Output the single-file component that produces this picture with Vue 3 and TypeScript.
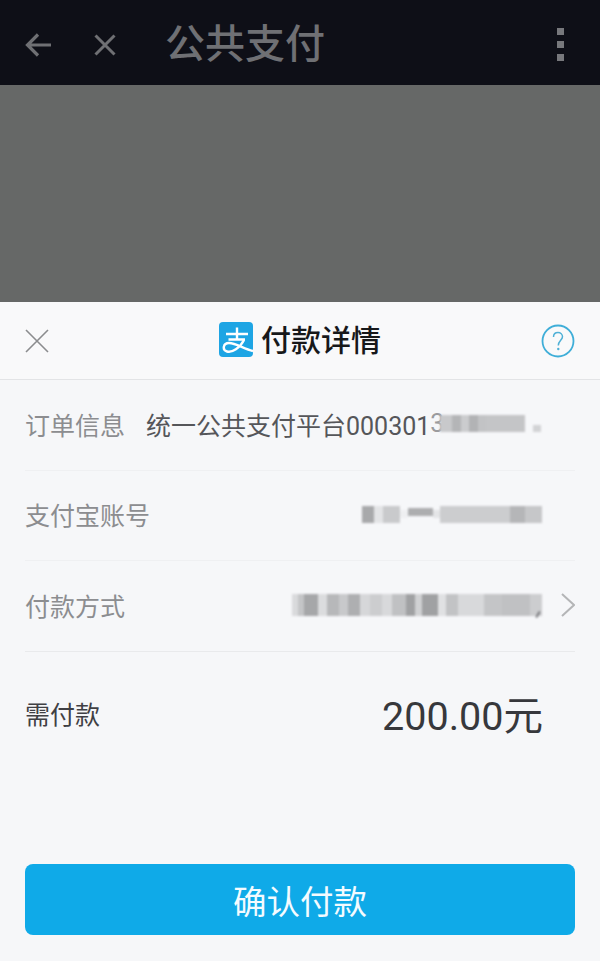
<script setup lang="ts">
interface Cell { w: number; c: string; h?: number; up?: number }
const orderBlur: Cell[] = [
  { w: 12, c: '#c8c9cb' }, { w: 9, c: '#b4b5b7' }, { w: 8, c: '#cbccce' }, { w: 9, c: '#b2b3b5' }, { w: 8, c: '#c2c3c5' }, { w: 39, c: '#c4c5c7' }
]
const accountBlur: Cell[] = [
  { w: 12, c: '#a8a9ab' }, { w: 9, c: '#e3e4e6' }, { w: 17, c: '#c9cacc' }, { w: 8, c: '#eeeff1', h: 8 },
  { w: 25, c: '#adaeb0', h: 8, up: 5 }, { w: 7, c: '#e4e5e7', h: 8 }, { w: 70, c: '#cccdcf' }, { w: 15, c: '#b5b6b8' }, { w: 17, c: '#c6c7c9' }
]
const methodBlur: Cell[] = [
  { w: 6, c: '#d9dadc' }, { w: 6, c: '#c4c5c7' }, { w: 14, c: '#a6a7a9' }, { w: 9, c: '#dbdcde' }, { w: 12, c: '#b7b8ba' }, { w: 9, c: '#c8c9cb' },
  { w: 12, c: '#aeafb1' }, { w: 10, c: '#d6d7d9' }, { w: 12, c: '#cccdcf' }, { w: 10, c: '#d8d9db' }, { w: 14, c: '#c0c1c3' }, { w: 9, c: '#a0a1a3' },
  { w: 7, c: '#d0d1d3' }, { w: 16, c: '#a0a1a3' }, { w: 8, c: '#e0e1e3' }, { w: 12, c: '#c2c3c5' }, { w: 26, c: '#d8d9db' }, { w: 18, c: '#c4c5c7' },
  { w: 28, c: '#c0c1c3' }, { w: 12, c: '#cccdcf' }
]
</script>

<template>
  <div class="page">
    <header class="topbar">
      <svg class="ico" width="30" height="30" viewBox="0 0 30 30" fill="none">
        <path d="M27 15H4M14 4.500L3.500 15 14 25.500" stroke="#6f7074" stroke-width="3.200" />
      </svg>
      <svg class="ico cross" width="24" height="24" viewBox="0 0 24 24" fill="none">
        <path d="M2.500 2.500L21.500 21.500M21.500 2.500L2.500 21.500" stroke="#6f7074" stroke-width="3" />
      </svg>
      <h1 class="title">公共支付</h1>
      <div class="dots"><i></i><i></i><i></i></div>
    </header>

    <div class="dim"></div>

    <section class="sheet">
      <div class="sheet-head">
        <svg width="26" height="26" viewBox="0 0 26 26" fill="none">
          <path d="M2 2L24 24M24 2L2 24" stroke="#8b8c8e" stroke-width="1.600" />
        </svg>
        <div class="head-title">
          <svg class="logo" width="34" height="35" viewBox="0 0 34 35">
            <rect width="34" height="35" rx="4" fill="#1ea5e4" />
            <g fill="none" stroke="#fff" stroke-width="2.400">
              <path d="M7 12H29M18 5.500V17.500M9.500 17.500H26" />
              <path d="M25 18C21 26 13 31 8 29.500C3 28 4 21 10 21C17 21 25 27 34 29" />
            </g>
          </svg>
          <span>付款详情</span>
        </div>
        <svg width="34" height="34" viewBox="0 0 34 34" fill="none">
          <circle cx="17" cy="17" r="15.500" stroke="#3faed8" stroke-width="1.800" />
          <path d="M12.500 13C12.500 10 14.500 8.500 17 8.500C19.500 8.500 21.500 10.300 21.500 12.800C21.500 16 17.300 17 17.300 21.500" stroke="#4fb0d6" stroke-width="1.500" />
          <circle cx="17.300" cy="25" r="1.200" fill="#4fb0d6" />
        </svg>
      </div>

      <div class="rows">
        <div class="row">
          <span class="label">订单信息</span>
          <span class="order">统一公共支付平台000301</span><span class="order-end">3</span>
          <span class="mosaic order-blur">
            <i v-for="(m, i) in orderBlur" :key="i" :style="{ width: m.w + 'px', background: m.c }"></i>
          </span>
          <span class="speck"></span>
        </div>
        <div class="row">
          <span class="label">支付宝账号</span>
          <span class="mosaic account-blur">
            <i
              v-for="(m, i) in accountBlur"
              :key="i"
              :style="{ width: m.w + 'px', background: m.c, height: (m.h || 17) + 'px', marginBottom: (m.up || 0) + 'px' }"
            ></i>
          </span>
        </div>
        <div class="row">
          <span class="label">付款方式</span>
          <span class="mosaic method-blur">
            <i v-for="(m, i) in methodBlur" :key="i" :style="{ width: m.w + 'px', background: m.c }"></i>
          </span>
          <svg class="chev" width="16" height="26" viewBox="0 0 16 26" fill="none">
            <path d="M3 2L15 13L3 24" stroke="#b4b5b7" stroke-width="2" />
          </svg>
        </div>
      </div>

      <div class="amount">
        <span class="amount-label">需付款</span>
        <span class="amount-value">200.00元</span>
      </div>

      <button class="pay" type="button">确认付款</button>
    </section>
  </div>
</template>

<style scoped>
.page {
  width: 600px;
  height: 961px;
  display: flex;
  flex-direction: column;
  overflow: hidden;
  font-family: Roboto, "Noto Sans CJK SC", sans-serif;
}
.topbar {
  height: 85px;
  flex: none;
  box-sizing: border-box;
  background: #0e0f17;
  display: flex;
  align-items: center;
  padding: 4px 36px 0 24px;
}
.ico {
  flex: none;
}
.cross {
  margin-left: 39px;
}
.title {
  margin: 0 0 0 48px;
  font-size: 40px;
  font-weight: 500;
  line-height: 48px;
  color: #6f7074;
}
.dots {
  margin-left: auto;
  display: flex;
  flex-direction: column;
  gap: 6px;
}
.dots i {
  display: block;
  width: 7px;
  height: 7px;
  background: #77787c;
}
.dim {
  height: 217px;
  flex: none;
  background: #666867;
}
.sheet {
  flex: 1;
  background: #f6f7f9;
  display: flex;
  flex-direction: column;
  padding-bottom: 26px;
}
.sheet-head {
  height: 78px;
  flex: none;
  box-sizing: border-box;
  background: #f9f9fa;
  border-bottom: 1px solid #e3e4e6;
  display: flex;
  align-items: center;
  justify-content: space-between;
  padding: 0 25px 0 24px;
}
.head-title {
  display: flex;
  align-items: center;
  gap: 8px;
  font-size: 30px;
  font-weight: 500;
  line-height: 36px;
  color: #17181a;
  margin-left: 9px;
}
.logo {
  margin-top: -2px;
}
.rows {
  margin: 0 25px;
  display: flex;
  flex-direction: column;
}
.row {
  height: 90.500px;
  box-sizing: border-box;
  border-bottom: 1px solid #eff0f2;
  display: flex;
  align-items: center;
  font-size: 25px;
  padding-bottom: 2px;
}
.row:last-child {
  border-bottom-color: #e9eaec;
}
.label {
  color: #8c8d90;
  white-space: nowrap;
}
.order {
  margin-left: 21px;
  color: #55565a;
  white-space: nowrap;
}
.order-end {
  color: #9a9b9e;
}
.mosaic {
  flex: none;
  display: flex;
  align-items: center;
  filter: blur(1.200px);
}
.mosaic i {
  display: block;
  flex: none;
  height: 17px;
}
.order-blur {
  margin-left: -4px;
}
.speck {
  width: 8px;
  height: 7px;
  margin: 9px 0 0 8px;
  background: #d2d3d5;
  filter: blur(1px);
}
.account-blur {
  margin-left: auto;
  margin-right: 33px;
}
.method-blur {
  margin-left: auto;
  position: relative;
}
.method-blur i {
  height: 22px;
}
.method-blur::after {
  content: "";
  position: absolute;
  right: 3px;
  bottom: -2px;
  width: 2px;
  height: 7px;
  background: #77787c;
  transform: rotate(30deg);
}
.chev {
  flex: none;
  margin-left: 17px;
}
.amount {
  margin: 0 57px 0 25px;
  height: 122px;
  flex: none;
  display: flex;
  align-items: center;
  justify-content: space-between;
}
.amount-label {
  font-size: 25px;
  color: #3f4044;
}
.amount-value {
  font-size: 39.500px;
  color: #37383c;
}
.pay {
  margin: auto 25px 0;
  height: 71px;
  flex: none;
  border: 0;
  border-radius: 8px;
  background: #0faae8;
  color: #f4fbff;
  font-family: inherit;
  font-size: 33.500px;
}
</style>
